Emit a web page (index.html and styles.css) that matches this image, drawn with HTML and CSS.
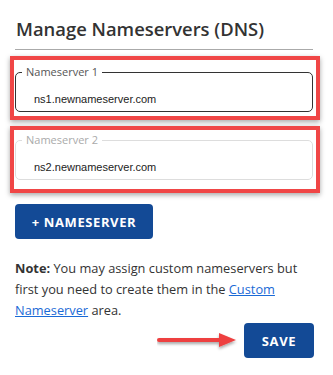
FILE: index.html
```html
<!DOCTYPE html>
<html>
<head>
<meta charset="utf-8">
<link rel="stylesheet" href="styles.css">
</head>
<body>
<div class="panel">
  <h2 class="title">Manage Nameservers (DNS)</h2>
  <div class="rule"></div>
  <div class="highlight hl-1">
    <fieldset class="field field-active">
      <legend class="field-label">Nameserver 1</legend>
      <input class="field-input" type="text" value="ns1.newnameserver.com">
    </fieldset>
  </div>
  <div class="highlight hl-2">
    <fieldset class="field">
      <legend class="field-label">Nameserver 2</legend>
      <input class="field-input" type="text" value="ns2.newnameserver.com">
    </fieldset>
  </div>
  <button class="btn btn-add">+ NAMESERVER</button>
  <p class="note"><b>Note:</b> You may assign custom nameservers but first you need to create them in the <a href="#">Custom Nameserver</a> area.</p>
  <div class="actions">
    <svg class="arrow" width="82" height="22" viewBox="0 0 82 22">
      <defs>
        <filter id="sh" x="-10%" y="-50%" width="120%" height="200%">
          <feDropShadow dx="0" dy="2" stdDeviation="1.5" flood-color="#000" flood-opacity="0.35"/>
        </filter>
      </defs>
      <g filter="url(#sh)">
        <line x1="2" y1="10" x2="66" y2="10" stroke="#ee4040" stroke-width="4" stroke-linecap="round"/>
        <polygon points="62,3 79,10 62,17" fill="#ee4040"/>
      </g>
    </svg>
    <button class="btn btn-save">SAVE</button>
  </div>
</div>
</body>
</html>
```
FILE: styles.css
```css
* { box-sizing: border-box; }
html, body { margin: 0; padding: 0; background: #fff; }
body { font-family: "Open Sans", "Liberation Sans", sans-serif; color: #333; }
.panel { width: 333px; padding: 0 19px 0 15px; }
.title {
  margin: 0;
  padding: 16px 0 0 1px;
  font-size: 18.4px;
  line-height: 25px;
  font-weight: 600;
  color: #333;
}
.rule { height: 1px; background: #aaa; margin: 8px 1px 0 0; }
.highlight {
  margin-left: -5px;
  margin-right: -6px;
  border: 4px solid #f04646;
  box-shadow: 0 2px 5px rgba(0,0,0,0.35);
}
.hl-1 { margin-top: 6px; padding: 5px 3px 4px 1px; }
.hl-2 { margin-top: 6px; padding: 3px 3px 9px 1px; }
.field {
  margin: 0;
  padding: 0;
  border: 1px solid #ddd;
  border-radius: 5px;
  min-width: 0;
}
.field-active { border-color: #333; }
.field-label {
  margin-left: 6px;
  padding: 0 4px;
  font-size: 11px;
  line-height: 14px;
  color: #aaa;
}
.field-active .field-label { color: #555; }
.field-input {
  display: block;
  width: 100%;
  height: 32px;
  margin: 0;
  padding: 7px 0 0 18px;
  border: 0;
  outline: none;
  background: transparent;
  font-family: "Liberation Sans", Arial, sans-serif;
  font-size: 11px;
  color: #222;
}
.btn {
  display: inline-flex;
  align-items: center;
  justify-content: center;
  height: 35px;
  border: 0;
  border-radius: 4px;
  background: #134a96;
  color: #fff;
  font-family: "Open Sans", "Liberation Sans", sans-serif;
  font-weight: 700;
  font-size: 13px;
  letter-spacing: 0.6px;
  padding: 0;
}
.btn-add { width: 138px; margin-top: 11px; }
.note {
  margin: 19px 0 0 0;
  font-size: 12.8px;
  line-height: 21px;
  color: #333;
}
.note b { font-weight: 700; }
.note a { color: #1a6ad6; text-decoration: underline; }
.actions {
  display: flex;
  justify-content: flex-end;
  align-items: center;
  gap: 5px;
  margin-top: 2px;
}
.arrow { display: block; }
.btn-save { width: 70px; }
```
